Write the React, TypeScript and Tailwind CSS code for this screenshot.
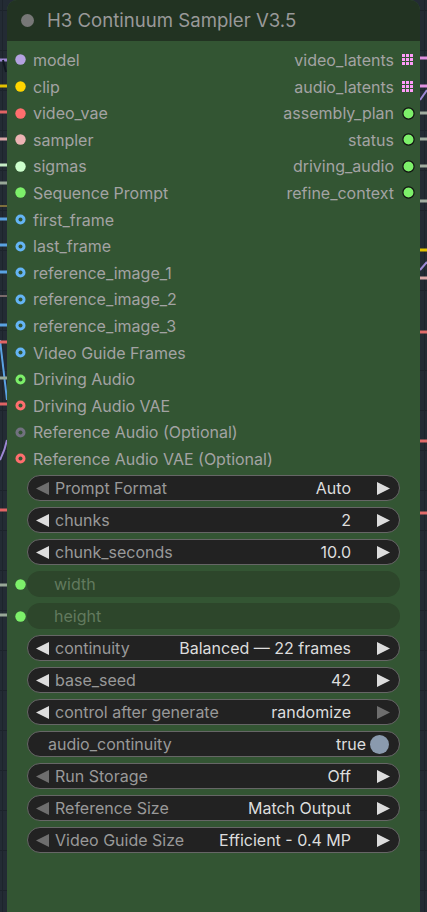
import React from 'react';

type Slot = { label: string; color: string; ring?: boolean };

const inputs: Slot[] = [
  { label: 'model', color: '#b4a2e0' },
  { label: 'clip', color: '#ffd500' },
  { label: 'video_vae', color: '#ff6e6e' },
  { label: 'sampler', color: '#ecb4b4' },
  { label: 'sigmas', color: '#cdffcd' },
  { label: 'Sequence Prompt', color: '#7df06a' },
  { label: 'first_frame', color: '#64b5f6', ring: true },
  { label: 'last_frame', color: '#64b5f6', ring: true },
  { label: 'reference_image_1', color: '#64b5f6', ring: true },
  { label: 'reference_image_2', color: '#64b5f6', ring: true },
  { label: 'reference_image_3', color: '#64b5f6', ring: true },
  { label: 'Video Guide Frames', color: '#64b5f6', ring: true },
  { label: 'Driving Audio', color: '#7df06a', ring: true },
  { label: 'Driving Audio VAE', color: '#ff6e6e', ring: true },
  { label: 'Reference Audio (Optional)', color: '#71717f', ring: true },
  { label: 'Reference Audio VAE (Optional)', color: '#ff6e6e', ring: true },
];

type Out = { label: string; grid?: boolean };
const outputs: Out[] = [
  { label: 'video_latents', grid: true },
  { label: 'audio_latents', grid: true },
  { label: 'assembly_plan' },
  { label: 'status' },
  { label: 'driving_audio' },
  { label: 'refine_context' },
];

type Widget =
  | { kind: 'combo'; label: string; value: string; leftDim?: boolean; rightDim?: boolean }
  | { kind: 'disabled'; label: string }
  | { kind: 'toggle'; label: string; value: string };

const widgets: Widget[] = [
  { kind: 'combo', label: 'Prompt Format', value: 'Auto', leftDim: true },
  { kind: 'combo', label: 'chunks', value: '2' },
  { kind: 'combo', label: 'chunk_seconds', value: '10.0' },
  { kind: 'disabled', label: 'width' },
  { kind: 'disabled', label: 'height' },
  { kind: 'combo', label: 'continuity', value: 'Balanced — 22 frames' },
  { kind: 'combo', label: 'base_seed', value: '42' },
  { kind: 'combo', label: 'control after generate', value: 'randomize', rightDim: true },
  { kind: 'toggle', label: 'audio_continuity', value: 'true' },
  { kind: 'combo', label: 'Run Storage', value: 'Off', leftDim: true },
  { kind: 'combo', label: 'Reference Size', value: 'Match Output', leftDim: true },
  { kind: 'combo', label: 'Video Guide Size', value: 'Efficient - 0.4 MP', leftDim: true },
];

function InDot({ color, ring }: { color: string; ring?: boolean }) {
  return (
    <svg width="11" height="11" viewBox="0 0 11 11" className="shrink-0">
      {ring ? (
        <>
          <circle cx="5.5" cy="5.5" r="5" fill={color} />
          <circle cx="5.5" cy="5.5" r="2" fill="#335533" />
        </>
      ) : (
        <circle cx="5.5" cy="5.5" r="5.2" fill={color} />
      )}
    </svg>
  );
}

function OutDot({ grid }: { grid?: boolean }) {
  if (grid) {
    return (
      <svg width="11" height="11" viewBox="0 0 11 11" className="shrink-0">
        {[0, 1, 2].map((r) =>
          [0, 1, 2].map((c) => (
            <rect key={`${r}-${c}`} x={c * 4} y={r * 4} width="3" height="3" fill="#ff9cf9" />
          ))
        )}
      </svg>
    );
  }
  return (
    <svg width="13" height="13" viewBox="0 0 13 13" className="shrink-0">
      <circle cx="6.5" cy="6.5" r="5.6" fill="#7df06a" stroke="#111" strokeWidth="1.2" />
    </svg>
  );
}

function Arrow({ dir, dim }: { dir: 'l' | 'r'; dim?: boolean }) {
  return (
    <svg width="13" height="13" viewBox="0 0 13 13" className="shrink-0">
      <polygon
        points={dir === 'l' ? '0,6.5 13,0 13,13' : '13,6.5 0,0 0,13'}
        fill={dim ? '#6e6e6e' : '#dddddd'}
      />
    </svg>
  );
}

function WireBg() {
  const L = (y: number, c: string, w = 3) => (
    <rect key={`l${y}${c}`} x="0" y={y - w / 2} width="8" height={w} fill={c} />
  );
  const R = (y: number, c: string, w = 3) => (
    <rect key={`r${y}${c}`} x="419" y={y - w / 2} width="8" height={w} fill={c} />
  );
  const gridYs = [];
  for (let y = 10; y < 912; y += 40) gridYs.push(y);
  return (
    <svg className="absolute inset-0" width="427" height="912" viewBox="0 0 427 912">
      <rect width="427" height="912" fill="#232b34" />
      {gridYs.map((y) => (
        <rect key={`g${y}`} x="0" y={y} width="427" height="1" fill="#1c232b" />
      ))}
      <rect x="2" y="0" width="1" height="912" fill="#1d242c" />
      <rect x="424" y="0" width="1" height="912" fill="#1d242c" />
      {L(60, '#9d88d4')}
      <path d="M3 60 L6 72" stroke="#111820" strokeWidth="2" />
      {L(86, '#e2c100')}
      {L(112, '#e06464')}
      {L(139, '#dba8a8')}
      {L(165, '#c6ecc6')}
      {L(183, '#98a898')}
      {L(206, '#7d6f3c', 2)}
      {L(219, '#5aa2e2')}
      {L(245, '#5aa2e2')}
      {L(272, '#5aa2e2')}
      {L(296, '#7a6a6a', 2)}
      {L(325, '#5aa2e2')}
      <path d="M0 340 L7 400" stroke="#5aa2e2" strokeWidth="2" />
      {L(342, '#e06464')}
      {L(378, '#98a898')}
      {L(404, '#e06464')}
      <path d="M0 460 Q5 450 7 440" stroke="#9d88d4" strokeWidth="2" fill="none" />
      {L(510, '#e06464')}
      {L(585, '#98a898')}
      {L(615, '#98a898')}
      {R(58, '#e090e0')}
      {R(86, '#e090e0')}
      <path d="M420 100 L427 90" stroke="#9d88d4" strokeWidth="2" />
      {R(113, '#a0aca0')}
      {R(139, '#a0aca0')}
      {R(166, '#a0aca0')}
      {R(201, '#a0aca0')}
      {R(250, '#e2c100')}
      <path d="M420 270 L427 262" stroke="#9d88d4" strokeWidth="2" />
      {R(278, '#dba8a8')}
      {R(332, '#e06a6a')}
      {R(441, '#e06a6a')}
      {R(513, '#e06a6a')}
    </svg>
  );
}

export default function App() {
  return (
    <div className="relative w-[427px] h-[912px] overflow-hidden font-['Inter',sans-serif]">
      <WireBg />
      <div className="relative ml-[7px] w-[413px] h-[912px] flex flex-col rounded-t-[10px] overflow-hidden bg-[#335533]">
        {/* title */}
        <div className="h-[41px] shrink-0 bg-[#223322] flex items-center">
          <div className="ml-[13.5px] w-[13px] h-[13px] rounded-full bg-[#777777]" />
          <div className="ml-[13.5px] text-[18.6px] leading-none text-[#999999] whitespace-nowrap">
            H3 Continuum Sampler V3.5
          </div>
        </div>
        {/* slots */}
        <div className="pt-[5.7px] flex flex-col">
          {inputs.map((inp, i) => {
            const out = outputs[i];
            return (
              <div key={inp.label} className="h-[26.6px] flex items-center text-[16px] leading-none">
                <div className="w-[26px] pl-[7.5px] flex items-center shrink-0">
                  <InDot color={inp.color} ring={inp.ring} />
                </div>
                <div className="text-[#a3a3a3] whitespace-nowrap">{inp.label}</div>
                <div className="flex-1" />
                {out && (
                  <>
                    <div className="text-[#a3a3a3] whitespace-nowrap">{out.label}</div>
                    <div className="w-[26px] flex items-center shrink-0 pl-[8px]">
                      <OutDot grid={out.grid} />
                    </div>
                  </>
                )}
              </div>
            );
          })}
        </div>
        {/* widgets */}
        <div className="mt-[2.7px] flex flex-col gap-[5.4px]">
          {widgets.map((w) => (
            <div key={w.label} className="h-[26.6px] flex items-center text-[16px] leading-none">
              <div className="w-[20px] shrink-0 pl-[8px] flex items-center">
                {w.kind === 'disabled' && <InDot color="#7df06a" />}
              </div>
              {w.kind === 'combo' && (
                <div className="flex-1 mr-[20px] h-full rounded-full border border-[#666666] bg-[#222222] flex items-center pl-[8px] pr-[9px]">
                  <Arrow dir="l" dim={w.leftDim} />
                  <div className="ml-[6px] text-[#999999] whitespace-nowrap">{w.label}</div>
                  <div className="flex-1" />
                  <div className="text-[#dddddd] whitespace-nowrap">{w.value}</div>
                  <div className="w-[26px] shrink-0" />
                  <Arrow dir="r" dim={w.rightDim} />
                </div>
              )}
              {w.kind === 'disabled' && (
                <div className="flex-1 mr-[20px] h-full rounded-full bg-[#2d462b] flex items-center pl-[27px]">
                  <div className="text-[#627a5e] whitespace-nowrap">{w.label}</div>
                </div>
              )}
              {w.kind === 'toggle' && (
                <div className="flex-1 mr-[20px] h-full rounded-full border border-[#666666] bg-[#222222] flex items-center pl-[20px] pr-[10px]">
                  <div className="text-[#999999] whitespace-nowrap">{w.label}</div>
                  <div className="flex-1" />
                  <div className="text-[#dddddd] whitespace-nowrap">{w.value}</div>
                  <div className="ml-[4px] w-[19px] h-[19px] rounded-full bg-[#8a9aae]" />
                </div>
              )}
            </div>
          ))}
        </div>
      </div>
    </div>
  );
}
